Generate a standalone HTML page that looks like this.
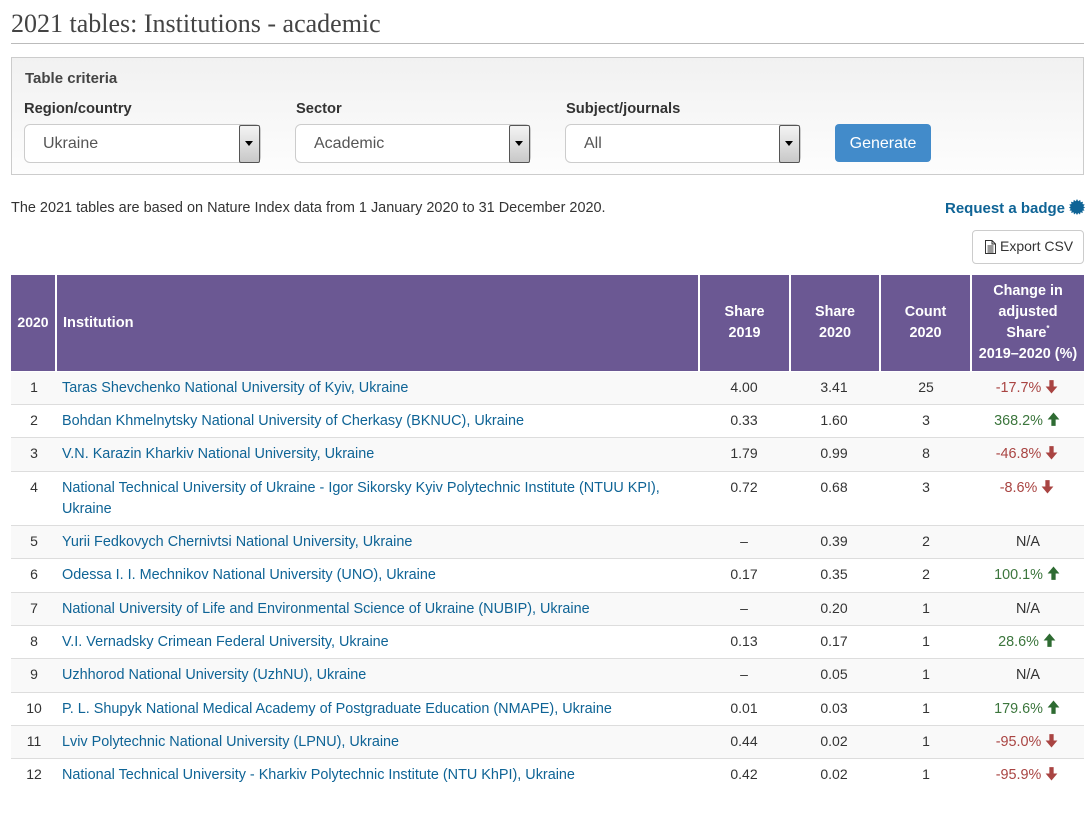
<!DOCTYPE html>
<html><head><meta charset="utf-8"><style>
html,body{margin:0;padding:0;background:#fff}
body{width:1092px;height:817px;position:relative;overflow:hidden;font-family:"Liberation Sans",sans-serif;font-size:14px;color:#333}
.a{position:absolute;white-space:nowrap}
h1{position:absolute;left:11px;top:9px;margin:0;font:400 26px/30px "Liberation Serif",serif;color:#444}
.sel{position:absolute;top:124px;height:37px;background:#fff;border:1px solid #ccc;border-radius:6px;box-sizing:content-box}
.sel span{position:absolute;top:0;line-height:37px;font-size:16px;color:#555}
.sb{position:absolute;top:0;right:0;width:19px;height:36px;border:1px solid #555;border-radius:2px;background:linear-gradient(#f4f4f4,#c8c8c8)}
.sb:after{content:"";position:absolute;left:5px;top:15px;border:4px solid transparent;border-top:5px solid #000;border-bottom:0}
.lab{position:absolute;top:99px;font-weight:700;font-size:14.7px;line-height:20px;color:#333}
.th{position:absolute;top:275px;height:96px;box-sizing:border-box;background:#6b5893;color:#fff;font-weight:700;text-align:center;line-height:21px;display:flex;align-items:center;justify-content:center;font-size:14.4px}
.row{position:absolute;left:11px;width:1073px;border-bottom:1px solid #ddd;box-sizing:border-box}
.row.o{background:#f9f9f9}
.c{position:absolute;top:6px;text-align:center;line-height:20px;color:#333;white-space:nowrap}
.n{left:0;width:46px;top:5px}
.i{left:51px;width:630px;text-align:left;color:#0f6496;white-space:normal;line-height:21px;font-size:14.42px}
.s1{left:688px;width:90px;top:5px}
.s2{left:779px;width:88px;top:5px}
.s3{left:870px;width:90px;top:5px}
.s4{left:961px;width:112px;font-size:14.4px}
.s4.dn,.s4.up{width:110px}
.dn{color:#a94442}.up{color:#3c763d}
.s4 svg{vertical-align:-2px}
</style></head><body>
<h1>2021 tables: Institutions - academic</h1>
<div class="a" style="left:11px;top:43px;width:1073px;height:1px;background:#bbb"></div>
<div class="a" style="left:11px;top:57px;width:1071px;height:116px;border:1px solid #ccc;background:linear-gradient(#f1f1f1,#fdfdfd)"></div>
<div class="a" style="left:25px;top:69px;font-weight:700;font-size:15px;line-height:20px;color:#444">Table criteria</div>
<div class="lab" style="left:24px">Region/country</div>
<div class="lab" style="left:296px">Sector</div>
<div class="lab" style="left:566px">Subject/journals</div>
<div class="sel" style="left:24px;width:235px"><span style="left:18px">Ukraine</span><div class="sb"></div></div>
<div class="sel" style="left:295px;width:234px"><span style="left:18px">Academic</span><div class="sb"></div></div>
<div class="sel" style="left:565px;width:234px"><span style="left:18px">All</span><div class="sb"></div></div>
<div class="a" style="left:835px;top:124px;width:96px;height:38px;background:#428bca;border-radius:4px;color:#fff;font-size:16px;line-height:39px;text-align:center">Generate</div>
<div class="a" style="left:11px;top:198px;line-height:20px;font-size:14.46px">The 2021 tables are based on Nature Index data from 1 January 2020 to 31 December 2020.</div>
<div class="a" style="left:945px;top:199px;line-height:20px;font-weight:700;font-size:15px;color:#0f6496">Request a badge</div>
<svg class="a" style="left:1069px;top:199px" width="16" height="16" viewBox="0 0 16 16"><polygon fill="#0f6496" points="8,0 9.2,2.2 11.2,0.9 11.7,3.3 14,2.8 13.5,5 15.8,5.600 14.3,7.300 16,8.500 14.300,9.700 15.500,11.500 13.300,11.700 13.800,14 11.500,13.300 11,15.500 9.200,14 8,16 6.800,14 5,15.500 4.500,13.300 2.200,14 2.700,11.700 .5,11.500 1.700,9.700 0,8.500 1.700,7.300 .2,5.600 2.500,5 2,2.800 4.300,3.300 4.800,.9 6.800,2.200"/></svg>
<div class="a" style="left:972px;top:230px;width:110px;height:32px;border:1px solid #ccc;border-radius:4px;background:#fff;line-height:31px;color:#333"><svg style="position:absolute;left:11px;top:9px" width="13" height="14" viewBox="0 0 13 14" fill="none" stroke="#333"><path d="M1.500.5h6.500l3.500 3.500v9.500h-10zM8 .5v3.500h3.500M3.500 6h6M3.500 8h6M3.500 10h6M3.500 12h6"/></svg><span style="position:absolute;left:27px;top:0">Export CSV</span></div>

<div class="th" style="left:11px;width:44px;font-size:14px;padding-bottom:2px">2020</div>
<div class="th" style="left:57px;width:641px;justify-content:flex-start;padding-left:6px;font-size:14.6px">Institution</div>
<div class="th" style="left:700px;width:89px">Share<br>2019</div>
<div class="th" style="left:791px;width:88px">Share<br>2020</div>
<div class="th" style="left:881px;width:89px">Count<br>2020</div>
<div class="th" style="left:972px;width:112px"><div>Change in<br>adjusted<br>Share<sup style="font-size:8px;line-height:0">*</sup><br>2019–2020 (%)</div></div>

<div class="row o" style="top:372px;height:33px"><div class="c n">1</div><div class="c i">Taras Shevchenko National University of Kyiv, Ukraine</div><div class="c s1">4.00</div><div class="c s2">3.41</div><div class="c s3">25</div><div class="c s4 dn">-17.7% <svg width="13" height="15" viewBox="0 0 12 14"><path fill="#a94442" d="M4 1h4v6h3.500L6 13.500.5 7H4z"/></svg></div></div>
<div class="row" style="top:405px;height:33px"><div class="c n">2</div><div class="c i">Bohdan Khmelnytsky National University of Cherkasy (BKNUC), Ukraine</div><div class="c s1">0.33</div><div class="c s2">1.60</div><div class="c s3">3</div><div class="c s4 up">368.2% <svg width="13" height="15" viewBox="0 0 12 14"><path fill="#2e6b32" d="M6 .5L11.500 7H8v6H4V7H.5z"/></svg></div></div>
<div class="row o" style="top:438px;height:34px"><div class="c n">3</div><div class="c i">V.N. Karazin Kharkiv National University, Ukraine</div><div class="c s1">1.79</div><div class="c s2">0.99</div><div class="c s3">8</div><div class="c s4 dn">-46.8% <svg width="13" height="15" viewBox="0 0 12 14"><path fill="#a94442" d="M4 1h4v6h3.500L6 13.500.5 7H4z"/></svg></div></div>
<div class="row" style="top:472px;height:54px"><div class="c n">4</div><div class="c i">National Technical University of Ukraine - Igor Sikorsky Kyiv Polytechnic Institute (NTUU KPI), Ukraine</div><div class="c s1">0.72</div><div class="c s2">0.68</div><div class="c s3">3</div><div class="c s4 dn">-8.6% <svg width="13" height="15" viewBox="0 0 12 14"><path fill="#a94442" d="M4 1h4v6h3.500L6 13.500.5 7H4z"/></svg></div></div>
<div class="row o" style="top:526px;height:33px"><div class="c n">5</div><div class="c i">Yurii Fedkovych Chernivtsi National University, Ukraine</div><div class="c s1">–</div><div class="c s2">0.39</div><div class="c s3">2</div><div class="c s4">N/A</div></div>
<div class="row" style="top:559px;height:34px"><div class="c n">6</div><div class="c i">Odessa I. I. Mechnikov National University (UNO), Ukraine</div><div class="c s1">0.17</div><div class="c s2">0.35</div><div class="c s3">2</div><div class="c s4 up">100.1% <svg width="13" height="15" viewBox="0 0 12 14"><path fill="#2e6b32" d="M6 .5L11.500 7H8v6H4V7H.5z"/></svg></div></div>
<div class="row o" style="top:593px;height:33px"><div class="c n">7</div><div class="c i">National University of Life and Environmental Science of Ukraine (NUBIP), Ukraine</div><div class="c s1">–</div><div class="c s2">0.20</div><div class="c s3">1</div><div class="c s4">N/A</div></div>
<div class="row" style="top:626px;height:33px"><div class="c n">8</div><div class="c i">V.I. Vernadsky Crimean Federal University, Ukraine</div><div class="c s1">0.13</div><div class="c s2">0.17</div><div class="c s3">1</div><div class="c s4 up">28.6% <svg width="13" height="15" viewBox="0 0 12 14"><path fill="#2e6b32" d="M6 .5L11.500 7H8v6H4V7H.5z"/></svg></div></div>
<div class="row o" style="top:659px;height:34px"><div class="c n">9</div><div class="c i">Uzhhorod National University (UzhNU), Ukraine</div><div class="c s1">–</div><div class="c s2">0.05</div><div class="c s3">1</div><div class="c s4">N/A</div></div>
<div class="row" style="top:693px;height:33px"><div class="c n">10</div><div class="c i">P. L. Shupyk National Medical Academy of Postgraduate Education (NMAPE), Ukraine</div><div class="c s1">0.01</div><div class="c s2">0.03</div><div class="c s3">1</div><div class="c s4 up">179.6% <svg width="13" height="15" viewBox="0 0 12 14"><path fill="#2e6b32" d="M6 .5L11.500 7H8v6H4V7H.5z"/></svg></div></div>
<div class="row o" style="top:726px;height:33px"><div class="c n">11</div><div class="c i">Lviv Polytechnic National University (LPNU), Ukraine</div><div class="c s1">0.44</div><div class="c s2">0.02</div><div class="c s3">1</div><div class="c s4 dn">-95.0% <svg width="13" height="15" viewBox="0 0 12 14"><path fill="#a94442" d="M4 1h4v6h3.500L6 13.500.5 7H4z"/></svg></div></div>
<div class="row" style="top:759px;height:33px;border-bottom:0"><div class="c n">12</div><div class="c i">National Technical University - Kharkiv Polytechnic Institute (NTU KhPI), Ukraine</div><div class="c s1">0.42</div><div class="c s2">0.02</div><div class="c s3">1</div><div class="c s4 dn">-95.9% <svg width="13" height="15" viewBox="0 0 12 14"><path fill="#a94442" d="M4 1h4v6h3.500L6 13.500.5 7H4z"/></svg></div></div>
</body></html>
